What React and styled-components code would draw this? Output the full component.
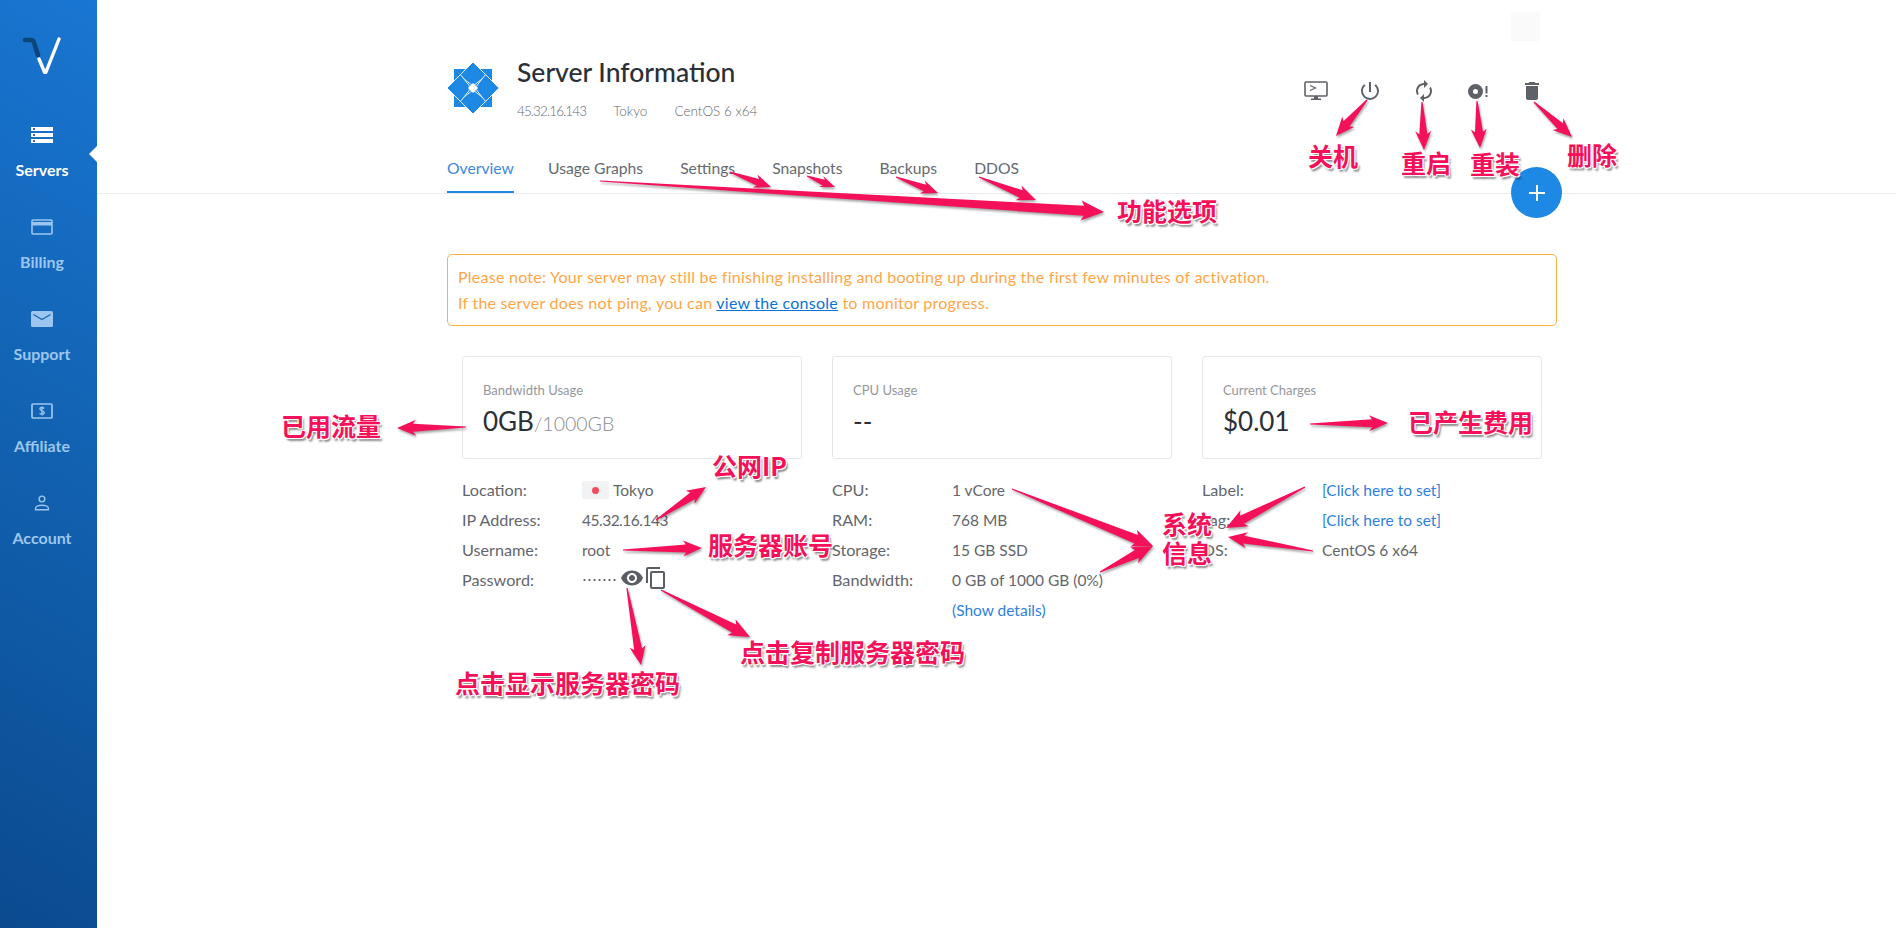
import React from "react";
import styled, { createGlobalStyle } from "styled-components";
import { MdVisibility, MdContentCopy, MdDelete, MdSync, MdPowerSettingsNew } from "react-icons/md";

const GlobalStyle = createGlobalStyle`
  * {
    box-sizing: border-box;
  }

  html, body {
    margin: 0;
    padding: 0;
    height: 100%;
    background: #fff;
    overflow: hidden;
    font-family: "Lato", "Noto Sans", sans-serif;
  }
`;

const Page = styled.div`
  position: relative;
  display: flex;
  width: 100%;
  height: 928px;
  overflow: hidden;
  background: #fff;
`;

// sidebar
const Sidebar = styled.nav`
  width: 97px;
  flex-shrink: 0;
  height: 100%;
  background: linear-gradient(30deg, #0b4a8f 0%, #1263b3 55%, #1976d2 100%);
  padding-top: 36px;
`;

const LogoBox = styled.div`
  height: 38px;
  margin-bottom: 49px;
  padding-right: 13px;
  display: flex;
  justify-content: center;
`;

const NavItem = styled.a`
  position: relative;
  height: 92px;
  display: flex;
  flex-direction: column;
  align-items: center;
  padding: 4px 13px 0 0;
  color: ${({ $active }) => ($active ? "#ffffff" : "#9cc6ef")};
  font-size: 16px;
  font-weight: 700;
  line-height: 18px;

  svg {
    display: block;
    height: 16px;
    margin-bottom: 18px;
  }

  ${({ $active }) =>
    $active &&
    `&::after {
      content: "";
      position: absolute;
      right: 0;
      top: 23px;
      border-style: solid;
      border-width: 8px 8px 8px 0;
      border-color: transparent #fff transparent transparent;
    }`}
`;

// main area
const Main = styled.main`
  position: relative;
  flex: 1;
  min-width: 0;
`;

const Header = styled.header`
  height: 194px;
  border-bottom: 1px solid #ebebeb;
  padding-left: 350px;
  display: flex;
  flex-direction: column;
`;

const TitleRow = styled.div`
  width: 1110px;
  display: flex;
  align-items: flex-start;
  padding-top: 62px;
  height: 150px;
`;

const ServerIcon = styled.div`
  width: 52px;
  height: 52px;
  margin-right: 18px;
  flex-shrink: 0;
`;

const Title = styled.h1`
  margin: -5px 0 0;
  font-size: 26.5px;
  line-height: 30px;
  font-weight: 500;
  color: #2b2f36;
`;

const SubRow = styled.div`
  display: flex;
  margin-top: 16px;
  font-size: 13.5px;
  font-weight: 300;
  line-height: 16px;
  color: #666a72;
`;

const SubItem = styled.span`
  margin-right: 27px;
  letter-spacing: ${({ $tight }) => ($tight ? "-0.9px" : "0")};
`;

const Actions = styled.div`
  margin-left: auto;
  margin-right: 13px;
  margin-top: 17px;
  display: flex;
  align-items: center;
  height: 24px;
  gap: 30px;
  color: #5f6168;
`;

const ActionIcon = styled.div`
  width: 24px;
  height: 24px;
  display: flex;
  align-items: center;
  justify-content: center;
  ${({ $flip }) => $flip && "transform: scaleX(-1);"}
`;

const Tabs = styled.div`
  display: flex;
  height: 44px;
  gap: 37px;
`;

const Tab = styled.a`
  display: block;
  height: 44px;
  padding-top: 9px;
  font-size: 15.7px;
  line-height: 20px;
  font-weight: 400;
  color: ${({ $active }) => ($active ? "#3d87df" : "#666a70")};
  border-bottom: 2px solid ${({ $active }) => ($active ? "#1e88e5" : "transparent")};
  ${({ $active }) => $active && "min-width: 67px; margin-right: -3px;"}
`;

const Fab = styled.div`
  position: absolute;
  left: 1414px;
  top: 167px;
  width: 51px;
  height: 51px;
  border-radius: 50%;
  background: #1e88e5;
  color: #fff;
  display: flex;
  align-items: center;
  justify-content: center;
`;

const GhostSquare = styled.div`
  position: absolute;
  left: 1414px;
  top: 12px;
  width: 29px;
  height: 29px;
  background: #fafafa;
`;

const Content = styled.div`
  width: 1110px;
  margin-left: 350px;
  padding-top: 60px;
`;

const Alert = styled.div`
  height: 72px;
  padding: 9px 10px;
  border: 1px solid #fbb040;
  border-radius: 5px;
  font-size: 16px;
  font-weight: 400;
  letter-spacing: 0.25px;
  line-height: 26px;
  color: #ffa646;

  a {
    color: #0a72d8;
    text-decoration: underline;
  }
`;

const Columns = styled.div`
  display: grid;
  grid-template-columns: repeat(3, 340px);
  column-gap: 30px;
  padding: 30px 15px 0;
`;

const Card = styled.div`
  height: 103px;
  border: 1px solid #e6e7e9;
  border-radius: 3px;
  padding: 24px 20px 0;
`;

const CardLabel = styled.div`
  font-size: 13px;
  line-height: 18px;
  font-weight: 400;
  color: #94979c;
`;

const CardValue = styled.div`
  margin-top: 6px;
  font-size: 26px;
  line-height: 32px;
  color: #2b2f36;

  small {
    font-size: 19.5px;
    font-weight: 300;
    color: #8b8e94;
  }
`;

const InfoList = styled.div`
  margin-top: 16px;
`;

const InfoRow = styled.div`
  display: flex;
  align-items: center;
  height: 30px;
  font-size: 15.5px;
  color: #63666d;
`;

const InfoKey = styled.div`
  width: 120px;
  flex-shrink: 0;
  margin-top: -1px;
  font-size: 16.2px;
  font-weight: 400;
`;

const InfoValue = styled.div`
  display: flex;
  align-items: center;
  font-weight: 400;
  white-space: nowrap;
  letter-spacing: ${({ $tight }) => ($tight ? "-0.5px" : "0")};

  a {
    color: #2f7fdc;
  }
`;

const Flag = styled.span`
  width: 27px;
  height: 18px;
  border-radius: 2px;
  background: #f1f2f4;
  display: flex;
  align-items: center;
  justify-content: center;
  margin-right: 4px;

  &::before {
    content: "";
    width: 7px;
    height: 7px;
    border-radius: 50%;
    background: #ef4d5c;
  }
`;

const Dots = styled.span`
  width: 34px;
  height: 2px;
  margin-right: 4px;
  background: radial-gradient(circle at center, #5e6168 1px, transparent 1.2px) 0 0 / 5px 2px;
`;

const PassIcons = styled.span`
  display: flex;
  align-items: center;
  color: #5a5d64;
  margin-top: -4px;
`;

// red hand-drawn notes that lie over the page
const NoteLayer = styled.svg`
  position: absolute;
  left: 0;
  top: 0;
  width: 1896px;
  height: 928px;
  pointer-events: none;
  filter: drop-shadow(1px 2px 1px rgba(0, 0, 0, 0.35));
`;

const Note = styled.div`
  position: absolute;
  left: ${({ $x }) => $x}px;
  top: ${({ $y }) => $y}px;
  transform: translateY(calc(-50% - 3px));
  font-family: "Noto Sans CJK SC", "Liberation Sans", sans-serif;
  font-size: 25px;
  font-weight: 700;
  line-height: 29px;
  white-space: ${({ $wrap }) => ($wrap ? "normal" : "nowrap")};
  width: ${({ $wrap }) => ($wrap ? "52px" : "auto")};
  color: #f5115a;
  text-shadow: -1px -1px 0 #fff, 1px -1px 0 #fff, -1px 1px 0 #fff, 1px 1px 0 #fff, 2px 3px 2px rgba(0, 0, 0, 0.45);
`;

const arrows = [
  [600, 181, 1104, 212, 10],
  [730, 172, 771, 187, 7],
  [807, 176, 835, 187, 6],
  [896, 177, 938, 193, 7],
  [979, 177, 1036, 200, 8],
  [1367, 100, 1336, 136, 8],
  [1422, 102, 1424, 150, 8],
  [1477, 101, 1480, 148, 8],
  [1534, 102, 1572, 137, 8],
  [466, 427, 397, 428, 8],
  [656, 520, 706, 487, 8],
  [623, 550, 702, 548, 8],
  [627, 588, 641, 665, 8],
  [661, 590, 750, 637, 9],
  [1310, 424, 1388, 423, 8],
  [1012, 489, 1153, 546, 9],
  [1100, 572, 1153, 546, 9],
  [1305, 487, 1226, 528, 9],
  [1313, 551, 1228, 537, 8],
];

const arrowPoints = ([x1, y1, x2, y2, w]) => {
  const len = Math.hypot(x2 - x1, y2 - y1);
  const ux = (x2 - x1) / len;
  const uy = (y2 - y1) / len;
  const nx = -uy;
  const ny = ux;
  const head = w * 2;
  const bx = x2 - ux * head;
  const by = y2 - uy * head;
  const neck = w * 0.5;
  const pts = [
    [x1 + nx * 0.6, y1 + ny * 0.6],
    [bx + nx * neck, by + ny * neck],
    [bx - ux * 3 + nx * w, by - uy * 3 + ny * w],
    [x2, y2],
    [bx - ux * 3 - nx * w, by - uy * 3 - ny * w],
    [bx - nx * neck, by - ny * neck],
    [x1 - nx * 0.6, y1 - ny * 0.6],
  ];
  return pts.map((p) => p.map((v) => v.toFixed(1)).join(",")).join(" ");
};

const notes = [
  { text: "功能选项", x: 1117, y: 213 },
  { text: "关机", x: 1308, y: 158 },
  { text: "重启", x: 1401, y: 165 },
  { text: "重装", x: 1470, y: 166 },
  { text: "删除", x: 1567, y: 157 },
  { text: "已用流量", x: 281, y: 428 },
  { text: "公网IP", x: 712, y: 468 },
  { text: "服务器账号", x: 708, y: 547 },
  { text: "已产生费用", x: 1408, y: 424 },
  { text: "点击显示服务器密码", x: 455, y: 685 },
  { text: "点击复制服务器密码", x: 740, y: 654 },
];

const ServersIcon = () => (
  <svg width="22" height="16" viewBox="0 0 22 16">
    <path fill="currentColor" d="M0 0h22v4H0zM0 6h22v4H0zM0 12h22v4H0z" />
    <path fill="#2f66c8" d="M2 1h2v2H2zM2 7h2v2H2zM2 13h2v2H2z" />
  </svg>
);

const BillingIcon = () => (
  <svg width="22" height="16" viewBox="0 0 22 16">
    <rect x="1" y="1" width="20" height="14" rx="1" fill="none" stroke="currentColor" strokeWidth="1.6" />
    <path fill="currentColor" d="M1 3h20v3.5H1z" />
  </svg>
);

const SupportIcon = () => (
  <svg width="22" height="16" viewBox="0 0 22 16">
    <rect width="22" height="16" rx="1.5" fill="currentColor" />
    <path d="M2.5 3.5 11 8.5l8.5-5" fill="none" stroke="#1565b5" strokeWidth="1.2" />
  </svg>
);

const AffiliateIcon = () => (
  <svg width="22" height="16" viewBox="0 0 22 16">
    <rect x="1" y="1" width="20" height="14" rx="1" fill="none" stroke="currentColor" strokeWidth="1.7" />
    <path
      d="M13.2 5.6c-.5-.8-1.3-1.1-2.2-1.1-1.2 0-2.1.6-2.1 1.6 0 2.1 4.4 1.2 4.4 3.4 0 1-1 1.7-2.3 1.7-1 0-1.9-.4-2.4-1.2M11 3.4v9.2"
      fill="none"
      stroke="currentColor"
      strokeWidth="1.3"
    />
  </svg>
);

const AccountIcon = () => (
  <svg width="22" height="18" viewBox="0 0 22 18">
    <circle cx="11" cy="4.5" r="3.2" fill="none" stroke="currentColor" strokeWidth="1.6" />
    <path d="M3.8 16.5v-1.6c0-2.2 4-3.4 7.2-3.4s7.2 1.2 7.2 3.4v1.6z" fill="none" stroke="currentColor" strokeWidth="1.6" />
  </svg>
);

const ConsoleIcon = () => (
  <svg width="24" height="20" viewBox="0 0 24 20">
    <rect x="1" y="1" width="22" height="14" rx="1" fill="none" stroke="currentColor" strokeWidth="1.6" />
    <path d="M6 4.5l5.5 2.5L6 9.5" fill="none" stroke="currentColor" strokeWidth="1.2" />
    <path fill="currentColor" d="M10 15h4v2.5h3V19H7v-1.5h3z" />
  </svg>
);

const ReinstallIcon = () => (
  <svg width="20" height="15" viewBox="0 0 20 15">
    <path fill="currentColor" fillRule="evenodd" d="M7.5 0a7.5 7.5 0 1 1 0 15a7.5 7.5 0 0 1 0-15zm0 5a2.5 2.5 0 1 0 0 5a2.5 2.5 0 0 0 0-5z" />
    <path fill="currentColor" d="M17.5 2h2v7.5h-2zM17.5 11h2v2h-2z" />
  </svg>
);

const ServerLogo = () => (
  <svg width="52" height="52" viewBox="0 0 52 52">
    <path fill="#1e88e5" d="M7 7h38v38H7z" />
    <g fill="#1e88e5" stroke="#fff" strokeWidth="0.9">
      <path d="M26 0l13.5 13.5L26 24 12.5 13.5z" />
      <path d="M26 52 12.5 38.5 26 28l13.5 10.5z" />
      <path d="M0 26l13.5-13.5L24 26 13.5 39.5z" />
      <path d="M52 26 38.5 39.5 28 26l10.5-13.5z" />
    </g>
    <path fill="#fff" d="M26 21l5 5-5 5-5-5z" />
  </svg>
);

const Logo = () => (
  <svg width="38" height="38" viewBox="0 0 38 38">
    <path d="M2 4h6c1.5 0 2.2.7 2.8 2L15 19" fill="none" stroke="#0d4577" strokeWidth="4.5" strokeLinecap="round" />
    <path d="M16 23l5.500 13c.3.7 1.200.7 1.500 0L36 3" fill="none" stroke="#fff" strokeWidth="3.400" strokeLinecap="round" strokeLinejoin="round" />
  </svg>
);

const navItems = [
  { label: "Servers", Icon: ServersIcon, active: true },
  { label: "Billing", Icon: BillingIcon },
  { label: "Support", Icon: SupportIcon },
  { label: "Affiliate", Icon: AffiliateIcon },
  { label: "Account", Icon: AccountIcon },
];

const tabs = ["Overview", "Usage Graphs", "Settings", "Snapshots", "Backups", "DDOS"];

export default function App() {
  return (
    <>
      <GlobalStyle />
      <Page>
        <Sidebar>
          <LogoBox>
            <Logo />
          </LogoBox>
          {navItems.map(({ label, Icon, active }) => (
            <NavItem key={label} $active={active}>
              <Icon />
              {label}
            </NavItem>
          ))}
        </Sidebar>

        <Main>
          <GhostSquare />
          <Header>
            <TitleRow>
              <ServerIcon>
                <ServerLogo />
              </ServerIcon>
              <div>
                <Title>Server Information</Title>
                <SubRow>
                  <SubItem $tight>45.32.16.143</SubItem>
                  <SubItem>Tokyo</SubItem>
                  <SubItem>CentOS 6 x64</SubItem>
                </SubRow>
              </div>
              <Actions>
                <ActionIcon>
                  <ConsoleIcon />
                </ActionIcon>
                <ActionIcon>
                  <MdPowerSettingsNew size={24} />
                </ActionIcon>
                <ActionIcon $flip>
                  <MdSync size={24} />
                </ActionIcon>
                <ActionIcon>
                  <ReinstallIcon />
                </ActionIcon>
                <ActionIcon>
                  <MdDelete size={24} />
                </ActionIcon>
              </Actions>
            </TitleRow>
            <Tabs>
              {tabs.map((tab, i) => (
                <Tab key={tab} $active={i === 0}>
                  {tab}
                </Tab>
              ))}
            </Tabs>
          </Header>
          <Fab>
            <svg width="20" height="20" viewBox="0 0 20 20">
              <path d="M10 2v16M2 10h16" stroke="currentColor" strokeWidth="2" />
            </svg>
          </Fab>

          <Content>
            <Alert>
              Please note: Your server may still be finishing installing and booting up during the first few minutes of activation.
              <br />
              If the server does not ping, you can <a>view the console</a> to monitor progress.
            </Alert>

            <Columns>
              <div>
                <Card>
                  <CardLabel>Bandwidth Usage</CardLabel>
                  <CardValue>
                    0GB<small>/1000GB</small>
                  </CardValue>
                </Card>
                <InfoList>
                  <InfoRow>
                    <InfoKey>Location:</InfoKey>
                    <InfoValue>
                      <Flag />
                      Tokyo
                    </InfoValue>
                  </InfoRow>
                  <InfoRow>
                    <InfoKey>IP Address:</InfoKey>
                    <InfoValue $tight>45.32.16.143</InfoValue>
                  </InfoRow>
                  <InfoRow>
                    <InfoKey>Username:</InfoKey>
                    <InfoValue>root</InfoValue>
                  </InfoRow>
                  <InfoRow>
                    <InfoKey>Password:</InfoKey>
                    <InfoValue>
                      <Dots />
                      <PassIcons>
                        <MdVisibility size={24} />
                        <MdContentCopy size={24} />
                      </PassIcons>
                    </InfoValue>
                  </InfoRow>
                </InfoList>
              </div>

              <div>
                <Card>
                  <CardLabel>CPU Usage</CardLabel>
                  <CardValue>--</CardValue>
                </Card>
                <InfoList>
                  <InfoRow>
                    <InfoKey>CPU:</InfoKey>
                    <InfoValue>1 vCore</InfoValue>
                  </InfoRow>
                  <InfoRow>
                    <InfoKey>RAM:</InfoKey>
                    <InfoValue>768 MB</InfoValue>
                  </InfoRow>
                  <InfoRow>
                    <InfoKey>Storage:</InfoKey>
                    <InfoValue>15 GB SSD</InfoValue>
                  </InfoRow>
                  <InfoRow>
                    <InfoKey>Bandwidth:</InfoKey>
                    <InfoValue>0 GB of 1000 GB (0%)</InfoValue>
                  </InfoRow>
                  <InfoRow>
                    <InfoKey />
                    <InfoValue>
                      <a>(Show details)</a>
                    </InfoValue>
                  </InfoRow>
                </InfoList>
              </div>

              <div>
                <Card>
                  <CardLabel>Current Charges</CardLabel>
                  <CardValue>$0.01</CardValue>
                </Card>
                <InfoList>
                  <InfoRow>
                    <InfoKey>Label:</InfoKey>
                    <InfoValue>
                      <a>[Click here to set]</a>
                    </InfoValue>
                  </InfoRow>
                  <InfoRow>
                    <InfoKey>Tag:</InfoKey>
                    <InfoValue>
                      <a>[Click here to set]</a>
                    </InfoValue>
                  </InfoRow>
                  <InfoRow>
                    <InfoKey>OS:</InfoKey>
                    <InfoValue>CentOS 6 x64</InfoValue>
                  </InfoRow>
                </InfoList>
              </div>
            </Columns>
          </Content>
        </Main>

        <NoteLayer viewBox="0 0 1896 928">
          {arrows.map((a, i) => (
            <polygon key={i} points={arrowPoints(a)} fill="#f5115a" />
          ))}
        </NoteLayer>
        {notes.map((n) => (
          <Note key={n.text} $x={n.x} $y={n.y}>
            {n.text}
          </Note>
        ))}
        <Note $x={1162} $y={541} $wrap>
          系统 信息
        </Note>
      </Page>
    </>
  );
}
